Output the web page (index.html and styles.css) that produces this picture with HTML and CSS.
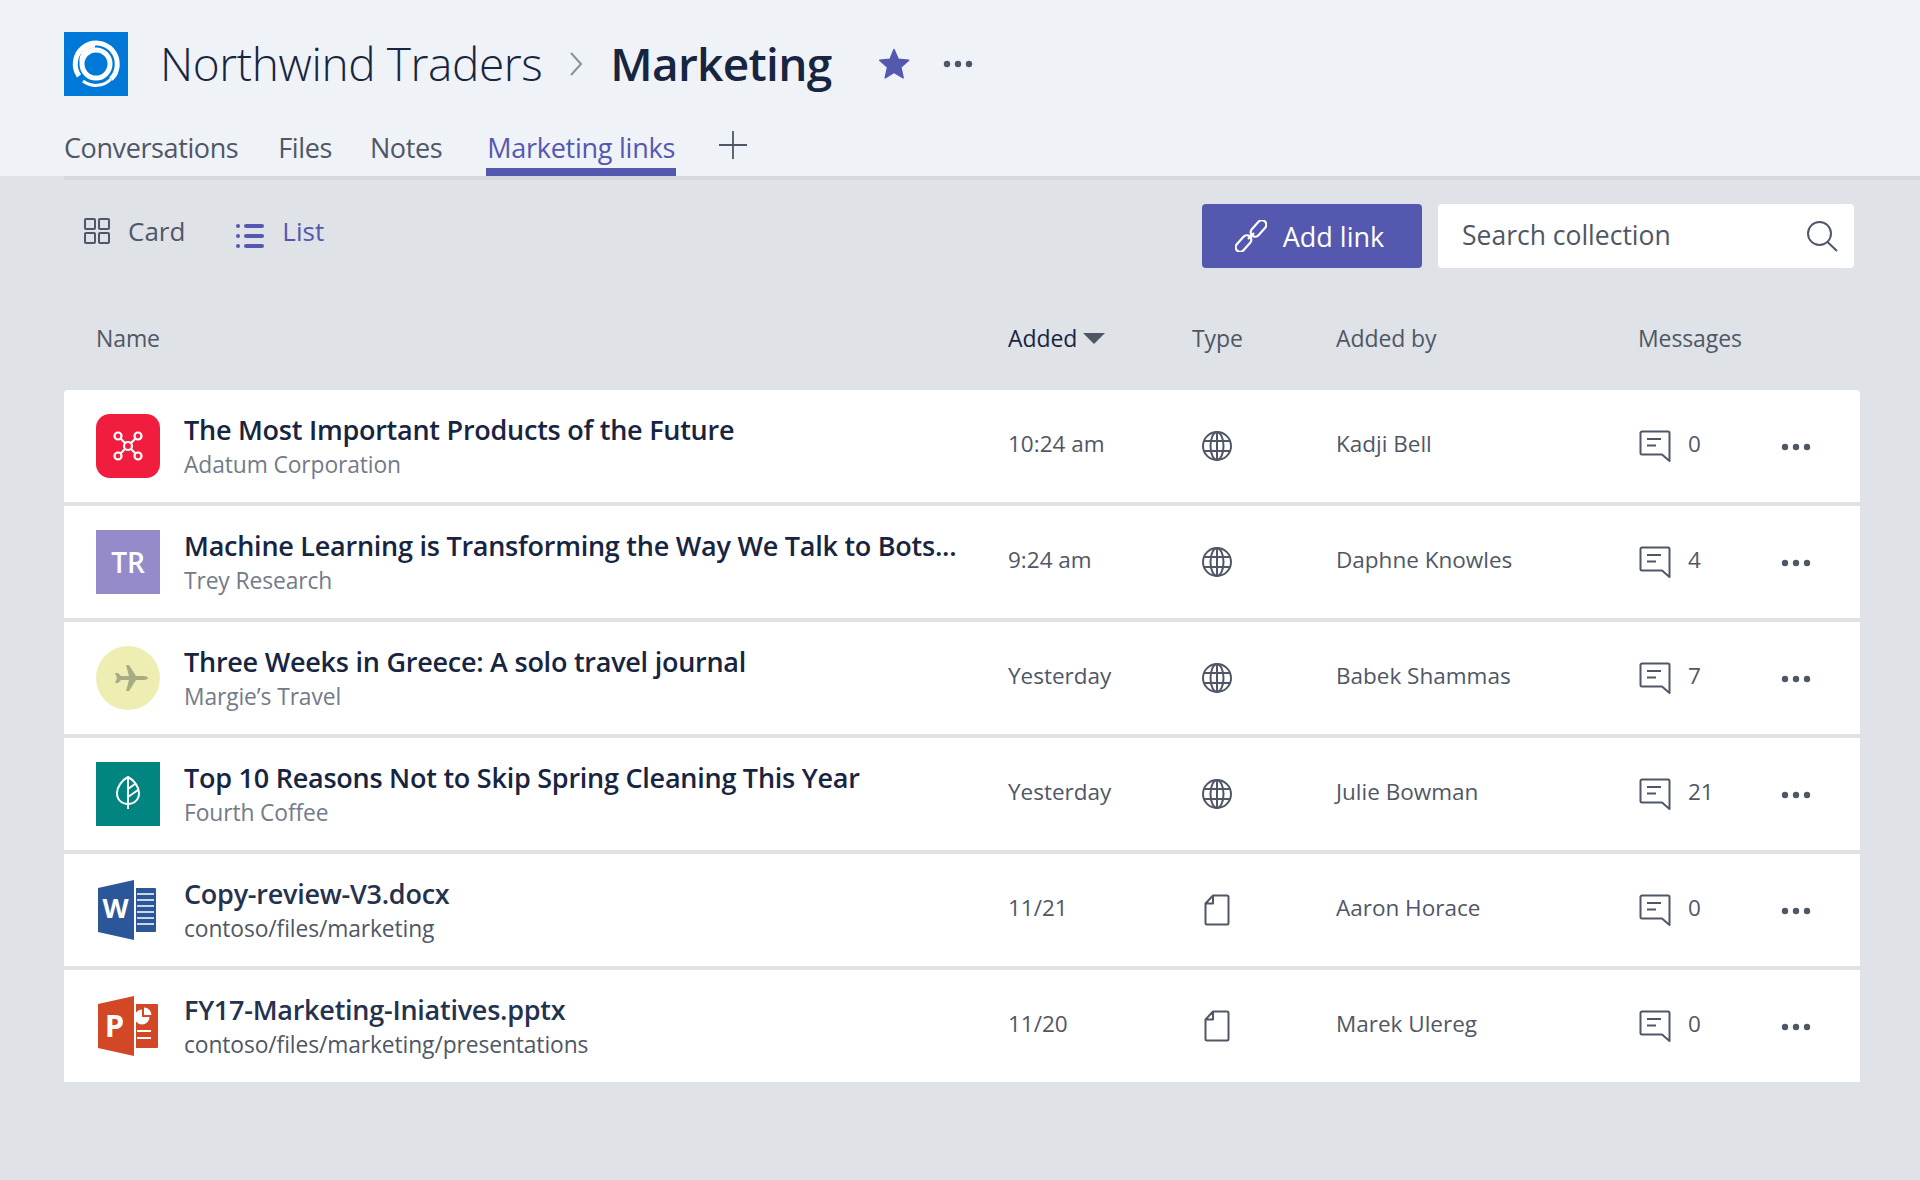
FILE: index.html
```html
<!DOCTYPE html>
<html lang="en">
<head>
<meta charset="utf-8">
<title>Marketing links</title>
<link rel="stylesheet" href="styles.css">
</head>
<body>
<svg class="defs" aria-hidden="true">
  <symbol id="i-globe" viewBox="0 0 32 32"><g fill="none" stroke="currentColor" stroke-width="2"><circle cx="16" cy="16" r="14"/><ellipse cx="16" cy="16" rx="6.5" ry="14"/><path d="M16 2v28M3 11h26M3 21h26"/></g></symbol>
  <symbol id="i-file" viewBox="0 0 26 32"><path d="M9 1.500h14a1.500 1.500 0 0 1 1.500 1.500v26a1.500 1.500 0 0 1-1.500 1.500H3A1.500 1.500 0 0 1 1.500 29V9.500zM9 1.500v8H1.500" fill="none" stroke="currentColor" stroke-width="2" stroke-linejoin="round"/></symbol>
  <symbol id="i-msg" viewBox="0 0 32 32"><path d="M3 1.500h26a1.500 1.500 0 0 1 1.500 1.500v28l-7.500-6.500H3A1.500 1.500 0 0 1 1.500 23V3A1.500 1.500 0 0 1 3 1.500zM8 9h14M8 15.500h9" fill="none" stroke="currentColor" stroke-width="2" stroke-linejoin="round"/></symbol>
  <symbol id="i-dots" viewBox="0 0 30 8"><circle cx="4" cy="4" r="3.200" fill="currentColor"/><circle cx="15" cy="4" r="3.200" fill="currentColor"/><circle cx="26" cy="4" r="3.200" fill="currentColor"/></symbol>
</svg>

<header class="header">
  <div class="title-row">
    <div class="team-logo">
      <svg viewBox="0 0 64 64" width="64" height="64"><rect width="64" height="64" fill="#0078d7"/><g fill="none" stroke="#fff"><circle cx="32" cy="32" r="14" stroke-width="5"/><path d="M15 44A21 21 0 1 1 47 47" stroke-width="5"/><path d="M19 49A21 21 0 0 0 47 47" stroke-width="3"/><path d="M17 30A15 15 0 0 1 31 14" stroke-width="3"/></g></svg>
    </div>
    <h1 class="crumb">Northwind Traders</h1>
    <svg class="crumb-sep" viewBox="0 0 14 24" width="14" height="24"><path d="M2 1l10 11L2 23" fill="none" stroke="#8a919c" stroke-width="2"/></svg>
    <h2 class="channel">Marketing</h2>
    <svg class="star" viewBox="0 0 32 32" width="32" height="32"><path d="M16 1.500l4.300 9.700 10.400 1-7.900 7 2.400 10.600L16 24.300l-8.800 5.500 2.400-10.600-7.900-7 10.400-1z" fill="#5558af" stroke="#5558af" stroke-linejoin="round" stroke-width="1.500"/></svg>
    <svg class="title-more"><use href="#i-dots"/></svg>
  </div>
  <nav class="tabs">
    <a class="tab">Conversations</a>
    <a class="tab">Files</a>
    <a class="tab">Notes</a>
    <a class="tab tab-active">Marketing links</a>
    <svg class="tab-add" viewBox="0 0 28 28" width="28" height="28"><path d="M14 0v28M0 14h28" stroke="#4f5766" stroke-width="1.800"/></svg>
  </nav>
</header>

<main class="main">
  <div class="toolbar">
    <div class="views">
      <a class="view">
        <svg viewBox="0 0 26 26" width="26" height="26"><g fill="none" stroke="currentColor" stroke-width="2"><rect x="1" y="1" width="10" height="10" rx="1"/><rect x="15" y="1" width="10" height="10" rx="1"/><rect x="1" y="15" width="10" height="10" rx="1"/><rect x="15" y="15" width="10" height="10" rx="1"/></g></svg>
        Card
      </a>
      <a class="view view-active">
        <svg viewBox="0 0 28 26" width="28" height="26"><g fill="currentColor"><rect x="0" y="1" width="4" height="4" rx="2"/><rect x="8" y="1" width="20" height="4" rx="2"/><rect x="0" y="11" width="4" height="4" rx="2"/><rect x="8" y="11" width="20" height="4" rx="2"/><rect x="0" y="21" width="4" height="4" rx="2"/><rect x="8" y="21" width="20" height="4" rx="2"/></g></svg>
        List
      </a>
    </div>
    <button class="add-btn">
      <svg viewBox="0 0 32 32" width="32" height="32"><g fill="none" stroke="#fff" stroke-width="2.200"><rect x="-4.500" y="-9.500" width="9" height="19" rx="4.500" transform="translate(8.500 23.500) rotate(42)"/><rect x="-4.500" y="-9.500" width="9" height="19" rx="4.500" transform="translate(23.500 8.500) rotate(42)"/><path d="M13 19l6-6"/></g></svg>
      Add link
    </button>
    <div class="search">
      <span>Search collection</span>
      <svg viewBox="0 0 32 32" width="32" height="32"><g fill="none" stroke="#4f5766" stroke-width="2"><circle cx="13.500" cy="13.500" r="11.500"/><path d="M21.500 22L31 31"/></g></svg>
    </div>
  </div>

  <div class="grid col-head">
    <div class="head-name">Name</div>
    <div class="head-sorted">Added<i class="caret"></i></div>
    <div>Type</div>
    <div>Added by</div>
    <div>Messages</div>
    <div></div>
  </div>

  <section class="rows">
    <article class="grid row">
      <div class="name-cell">
        <div class="thumb thumb-red"><svg viewBox="0 0 64 64" width="64" height="64"><g fill="none" stroke="#fff" stroke-width="2.200"><circle cx="32" cy="32" r="4"/><circle cx="22" cy="22" r="3.500"/><circle cx="42" cy="22" r="3.500"/><circle cx="22" cy="42" r="3.500"/><circle cx="42" cy="42" r="3.500"/><path d="M24.500 24.500L29 29M39.500 24.500L35 29M24.500 39.500L29 35M39.500 39.500L35 35"/></g></svg></div>
        <div class="name-text"><div class="title">The Most Important Products of the Future</div><div class="sub">Adatum Corporation</div></div>
      </div>
      <div class="cell">10:24 am</div>
      <div class="type"><svg class="ic-globe"><use href="#i-globe"/></svg></div>
      <div class="cell">Kadji Bell</div>
      <div class="msgs"><svg class="ic-msg"><use href="#i-msg"/></svg><span class="count">0</span></div>
      <div class="more"><svg class="ic-dots"><use href="#i-dots"/></svg></div>
    </article>
    <article class="grid row">
      <div class="name-cell">
        <div class="thumb thumb-purple">TR</div>
        <div class="name-text"><div class="title">Machine Learning is Transforming the Way We Talk to Bots...</div><div class="sub">Trey Research</div></div>
      </div>
      <div class="cell">9:24 am</div>
      <div class="type"><svg class="ic-globe"><use href="#i-globe"/></svg></div>
      <div class="cell">Daphne Knowles</div>
      <div class="msgs"><svg class="ic-msg"><use href="#i-msg"/></svg><span class="count">4</span></div>
      <div class="more"><svg class="ic-dots"><use href="#i-dots"/></svg></div>
    </article>
    <article class="grid row">
      <div class="name-cell">
        <div class="thumb thumb-yellow"><svg viewBox="0 0 64 64" width="64" height="64"><path d="M30 19h3l7 11h7c3 0 5 1 5 2s-2 2-5 2h-7l-7 11h-3l3-11h-8l-3 3h-3l2-5-2-5h3l3 3h8z" fill="#a8ab84"/></svg></div>
        <div class="name-text"><div class="title">Three Weeks in Greece: A solo travel journal</div><div class="sub">Margie’s Travel</div></div>
      </div>
      <div class="cell">Yesterday</div>
      <div class="type"><svg class="ic-globe"><use href="#i-globe"/></svg></div>
      <div class="cell">Babek Shammas</div>
      <div class="msgs"><svg class="ic-msg"><use href="#i-msg"/></svg><span class="count">7</span></div>
      <div class="more"><svg class="ic-dots"><use href="#i-dots"/></svg></div>
    </article>
    <article class="grid row">
      <div class="name-cell">
        <div class="thumb thumb-teal"><svg viewBox="0 0 64 64" width="64" height="64"><path d="M32 15c6 3 11 10 11 16 0 7-5 11-11 11s-11-4-11-11c0-6 5-13 11-16zM32 15v32M32 27l7-5M32 35l10-7" fill="none" stroke="#fff" stroke-width="2"/></svg></div>
        <div class="name-text"><div class="title">Top 10 Reasons Not to Skip Spring Cleaning This Year</div><div class="sub">Fourth Coffee</div></div>
      </div>
      <div class="cell">Yesterday</div>
      <div class="type"><svg class="ic-globe"><use href="#i-globe"/></svg></div>
      <div class="cell">Julie Bowman</div>
      <div class="msgs"><svg class="ic-msg"><use href="#i-msg"/></svg><span class="count">21</span></div>
      <div class="more"><svg class="ic-dots"><use href="#i-dots"/></svg></div>
    </article>
    <article class="grid row">
      <div class="name-cell">
        <div class="thumb"><svg viewBox="0 0 64 64" width="64" height="64"><path d="M40 10h19a1 1 0 0 1 1 1v42a1 1 0 0 1-1 1H40z" fill="#2b579a"/><path d="M41 16h17M41 22h17M41 28h17M41 34h17M41 40h17M41 46h17" stroke="#fff" stroke-width="1.600"/><path d="M2 10L38 2v60L2 54z" fill="#2b579a"/><text class="doc-letter letter-w" x="19.500" y="40" text-anchor="middle">W</text></svg></div>
        <div class="name-text"><div class="title title-file">Copy-review-V3.docx</div><div class="sub sub-file">contoso/files/marketing</div></div>
      </div>
      <div class="cell">11/21</div>
      <div class="type"><svg class="ic-file"><use href="#i-file"/></svg></div>
      <div class="cell">Aaron Horace</div>
      <div class="msgs"><svg class="ic-msg"><use href="#i-msg"/></svg><span class="count">0</span></div>
      <div class="more"><svg class="ic-dots"><use href="#i-dots"/></svg></div>
    </article>
    <article class="grid row">
      <div class="name-cell">
        <div class="thumb"><svg viewBox="0 0 64 64" width="64" height="64"><path d="M40 10h21a1 1 0 0 1 1 1v42a1 1 0 0 1-1 1H40z" fill="#d24726"/><path d="M41 37h14M41 44h14" stroke="#fff" stroke-width="1.800"/><path d="M46 15.500a7.500 7.500 0 1 0 7.500 7.500H46z" fill="#fff"/><path d="M48 13.500a7.500 7.500 0 0 1 7.500 7.500H48z" fill="#fff"/><path d="M2 10L38 2v60L2 54z" fill="#d24726"/><text class="doc-letter letter-p" x="18.500" y="43" text-anchor="middle">P</text></svg></div>
        <div class="name-text"><div class="title title-file">FY17-Marketing-Iniatives.pptx</div><div class="sub sub-file">contoso/files/marketing/presentations</div></div>
      </div>
      <div class="cell">11/20</div>
      <div class="type"><svg class="ic-file"><use href="#i-file"/></svg></div>
      <div class="cell">Marek Ulereg</div>
      <div class="msgs"><svg class="ic-msg"><use href="#i-msg"/></svg><span class="count">0</span></div>
      <div class="more"><svg class="ic-dots"><use href="#i-dots"/></svg></div>
    </article>
  </section>
</main>
</body>
</html>
```
FILE: styles.css
```css
* { box-sizing: border-box; }
html, body { margin: 0; height: 100%; }
body {
  background: #dfe2e7;
  color: #4f5766;
  font-family: "Open Sans", "Noto Sans", sans-serif;
  font-size: 24px;
  height: 1180px;
  overflow: hidden;
}
.defs { display: none; }

.header { background: #eff2f7; height: 176px; padding: 32px 0 0 64px; }
.title-row { display: flex; align-items: center; height: 64px; }
.team-logo { width: 64px; height: 64px; }
.team-logo svg { display: block; }
.crumb { margin: 0 0 2px 32px; font-size: 46px; line-height: 62px; font-weight: 300; color: #182541; letter-spacing: -0.4px; white-space: nowrap; }
.crumb-sep { margin: 0 27px 0 27px; }
.channel { margin: 0 0 2px; font-size: 46px; line-height: 62px; font-weight: 600; color: #182541; letter-spacing: -0.7px; }
.star { margin-left: 46px; }
.title-more { width: 30px; height: 8px; margin-left: 33px; color: #4f5766; }

.tabs { display: flex; align-items: flex-start; margin-top: 28px; height: 52px; }
.tab { font-size: 27px; line-height: 48px; height: 52px; color: #4f5766; margin-right: 40px; white-space: nowrap; letter-spacing: -0.4px; }
.tab:nth-child(2) { margin-right: 38px; }
.tab:nth-child(3) { margin-right: 44px; }
.tab-active { width: 190px; color: #5558af; border-bottom: 8px solid #5558af; letter-spacing: -0.25px; text-align: center; margin-right: 43px; }
.tab-add { margin-top: 7px; }

.main { border-top: 4px solid #d5d8dd; margin-left: 64px; padding-right: 60px; }

.toolbar { display: flex; align-items: flex-start; height: 141px; padding-top: 24px; }
.views { display: flex; flex: 1; padding: 9px 0 0 20px; gap: 51px; }
.view { display: flex; align-items: center; gap: 18px; font-size: 26px; line-height: 36px; color: #4f5766; }
.view-active { color: #5558af; }
.view-active svg { margin-top: 10px; }
.add-btn {
  display: flex; align-items: center; justify-content: center; gap: 16px;
  width: 220px; height: 64px; border: 0; border-radius: 4px;
  background: #5558af; color: #fff; font: inherit; font-size: 27px; padding: 0 5px 0 0;
}
.search {
  display: flex; align-items: center; justify-content: space-between;
  width: 416px; height: 64px; margin: 0 6px 0 16px; padding: 0 16px 0 24px;
  background: #fff; border-radius: 4px; font-size: 26.500px;
}
.search span { margin-bottom: 2px; }

.grid { display: grid; grid-template-columns: 944px 184px 144px 302px 148px 1fr; align-items: center; }
.col-head { height: 34px; margin-bottom: 35px; font-size: 23px; line-height: 34px; letter-spacing: -0.1px; }
.head-name { padding-left: 32px; }
.head-sorted { display: flex; align-items: center; color: #182541; }
.caret { margin-left: 6px; border: 11px solid transparent; border-top: 11px solid #4f5766; border-bottom: 0; }

.rows { display: flex; flex-direction: column; gap: 4px; }
.row { height: 112px; background: #fff; font-size: 22.500px; }
.rows .row:first-child { border-radius: 4px 4px 0 0; }
.name-cell { display: flex; align-items: center; gap: 24px; padding-left: 32px; min-width: 0; }
.thumb { flex: none; width: 64px; height: 64px; display: flex; align-items: center; justify-content: center; }
.thumb svg { display: block; }
.thumb-red { background: #f01d3f; border-radius: 14px; }
.thumb-purple { background: #958bcb; color: #fff; font-size: 28px; font-weight: 600; }
.thumb-yellow { background: #eeeeb2; border-radius: 50%; }
.thumb-teal { background: #008580; }
.name-text { min-width: 0; margin-top: -1px; }
.title { font-size: 27px; line-height: 35px; font-weight: 600; color: #182541; white-space: nowrap; letter-spacing: -0.25px; }
.title-file { color: #25324f; }
.sub { margin-top: 2px; font-size: 22.800px; line-height: 31px; color: #727b89; white-space: nowrap; letter-spacing: -0.1px; }
.sub-file { color: #4f5766; }
.doc-letter { font-family: "Open Sans", sans-serif; font-weight: 700; fill: #fff; }
.letter-w { font-size: 27px; }
.letter-p { font-size: 31px; }

.cell { padding-bottom: 5px; }
.type { padding-left: 9px; display: flex; }
.ic-globe { width: 32px; height: 32px; }
.ic-file { width: 26px; height: 32px; margin-left: 3px; }
.msgs { display: flex; align-items: center; gap: 17px; padding-left: 1px; }
.count { margin-bottom: 5px; }
.ic-msg { width: 32px; height: 32px; }
.more { display: flex; padding: 2px 0 0; margin-left: -5px; }
.ic-dots { width: 30px; height: 8px; }
```
